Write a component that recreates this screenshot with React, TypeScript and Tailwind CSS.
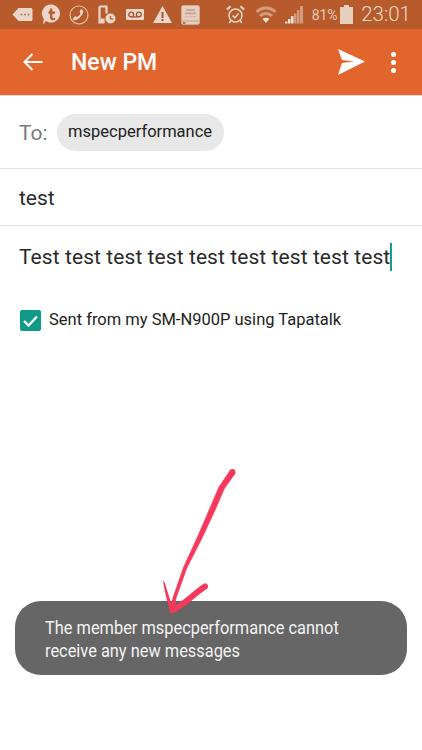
export default function App() {
  const sb = "#ecd6c9";
  const bg = "#b85b2c";
  return (
    <div className="relative w-[422px] h-[750px] bg-white overflow-hidden font-['Roboto',sans-serif]">
      {/* status bar */}
      <div className="h-[29px] bg-[#b85b2c] flex items-center pl-[12px] pr-[11px]">
        <div className="flex items-center">
          <svg width="21" height="15" viewBox="0 0 21 15"><path d="M6.500 1H19a1.500 1.500 0 0 1 1.500 1.500v10A1.500 1.500 0 0 1 19 14H6.500L.5 7.500z" fill={sb} /><circle cx="9.500" cy="7.500" r="1.100" fill="#a8876f" /><circle cx="13" cy="7.500" r="1.100" fill="#a8876f" /><circle cx="16.500" cy="7.500" r="1.100" fill="#a8876f" /></svg>
          <svg width="20" height="21" viewBox="0 0 20 21" className="ml-[8px]"><path d="M10 .5a9 9 0 1 1-5 16.500L2 20.500l.8-5.500A9 9 0 0 1 10 .5z" fill={sb} /><path d="M9 4.500h2.300V7.500h2.700v2.200h-2.700v3.300c0 1.200 1.200 1.400 2.700.8v2c-2.800 1-5-.1-5-2.600V9.700H7.500V8C8.500 7.600 9 6.300 9 4.500z" fill={bg} /></svg>
          <svg width="20" height="20" viewBox="0 0 20 20" fill="none" className="ml-[8px]"><circle cx="10" cy="10" r="9" stroke="#e6c3ae" strokeWidth="1.100" /><path d="M4.500 15.500c2-.2 3.800-1 5.800-2.600 2-1.800 3.500-4 4-6.200.1-.5 0-.9-.3-1.200l-1.300-1c-.5-.3-1-.2-1.200.3l-.8 1.700c-.2.400-.1.700.2 1l.7.700c-.7 1.500-2.300 3.100-3.800 3.900l-.8-.7c-.3-.2-.7-.3-1 0l-1.600 1.300c-.5.400-.6 1-.2 1.400z" fill={sb} /></svg>
          <svg width="18" height="19" viewBox="0 0 18 19" fill="none" className="ml-[9px]"><path d="M1.500 1.500h7v7M1.500 1.500v16h5" stroke={sb} strokeWidth="2.200" /><rect x="2.500" y="13.500" width="4" height="4" fill={sb} /><circle cx="12.500" cy="13.500" r="5" fill={sb} /><path d="M12.500 11v2.800h2.700" stroke={bg} strokeWidth="1.300" /></svg>
          <svg width="18" height="11" viewBox="0 0 18 11" fill="none" className="ml-[10px]"><rect width="18" height="11" rx="1" fill={sb} /><circle cx="5.200" cy="5.500" r="2.400" stroke="#a6552e" strokeWidth="1.300" /><circle cx="12.800" cy="5.500" r="2.400" stroke="#a6552e" strokeWidth="1.300" /><path d="M5.200 7.900h7.600" stroke="#a6552e" strokeWidth="1.300" /></svg>
          <svg width="19" height="17" viewBox="0 0 19 17" className="ml-[9px]"><path d="M9.500 0 19 17H0z" fill={sb} /><rect x="8.500" y="6" width="2" height="6" fill="#a6552e" /><rect x="8.500" y="13" width="2" height="2" fill="#a6552e" /></svg>
          <svg width="19" height="20" viewBox="0 0 19 20" className="ml-[9px]"><rect x=".5" y=".5" width="18" height="19" rx="2" fill="#e5cdbf" stroke="#d9a88c" /><rect x="5" y="4" width="9" height="1.800" fill="#c2a392" /><rect x="4" y="7.500" width="11" height="1.800" fill="#c2a392" /><rect x="4" y="11" width="11" height="1.200" fill="#d3b8a8" /><path d="M1 16h17.500" stroke="#c2a392" /><rect x="2" y="17" width="2.500" height="2" fill="#b27755" /></svg>
        </div>
        <div className="ml-auto flex items-center">
          <svg width="19" height="19" viewBox="0 0 19 19" fill="none" stroke={sb} strokeWidth="1.500"><circle cx="9.500" cy="10.500" r="6.500" /><path d="M6.500 10.500l2.300 2.300 3.700-4.300" /><path d="M1 4.500 4.500 1.200M18 4.500 14.500 1.200" strokeWidth="2.200" /><path d="M4.800 15.500 3.200 18M14.200 15.500l1.600 2.500" /></svg>
          <svg width="22" height="18" viewBox="0 0 22 18" fill="none" className="ml-[10px]"><path d="M1.500 6c5.500-5.300 13.500-5.300 19 0" stroke="#d39d7d" strokeWidth="3" /><path d="M5 10c3.500-3.300 8.500-3.300 12 0" stroke="#d39d7d" strokeWidth="3" /><path d="M7.500 12.800c2-1.500 5-1.500 7 0L11 17z" fill="#f0dfd4" /></svg>
          <svg width="19" height="19" viewBox="0 0 19 19" className="ml-[8px]"><path d="M0 18.500h2.500v-2H0zM3 18.500h2.500v-4.500H3zM6 18.500h2.500V11H6z" fill="#f0dfd4" /><path d="M9 18.500h2.500V8.500H9zM12 18.500h2.500V5H12zM15 18.500h3V1h-3z" fill="#d09c7e" /></svg>
          <span className="ml-[8px] text-[14px] leading-none text-[#e8c9b6] tracking-[-0.2px]">81%</span>
          <svg width="13" height="19" viewBox="0 0 13 19" className="ml-[3px]"><path d="M4 0h5v2h4v17H0V2h4z" fill="#e8cebf" /></svg>
          <span className="ml-[8px] text-[20.500px] font-light leading-none text-[#eed8cb]">23:01</span>
        </div>
      </div>

      {/* toolbar */}
      <div className="h-[67px] bg-[#e2652e] flex items-center text-white border-b border-[#dcd8d5]">
        <svg width="20" height="18" viewBox="0 0 20 18" fill="none" stroke="#fff" strokeWidth="2" className="ml-[23px]"><path d="M19.500 9H1.500M9.500 1 1.500 9l8 8" /></svg>
        <span className="ml-[28px] text-[23px] font-medium leading-none mt-[1px]">New PM</span>
        <svg width="27" height="26" viewBox="0 0 27 26" className="ml-auto"><path d="M0 0 27 12.500 0 26l4-12 12-1.500L4 11z" fill="#fff" /></svg>
        <div className="ml-[26px] mr-[26px] flex flex-col gap-[3px]">
          <div className="w-[5px] h-[5px] rounded-full bg-white" />
          <div className="w-[5px] h-[5px] rounded-full bg-white" />
          <div className="w-[5px] h-[5px] rounded-full bg-white" />
        </div>
      </div>

      {/* To row */}
      <div className="h-[73px] flex items-center pl-[19px] border-b border-[#e2e2e2]">
        <span className="text-[21px] text-[#7a7a7a] leading-none mt-[2px]">To:</span>
        <span className="ml-[9px] h-[37px] w-[167px] flex items-center justify-center rounded-full bg-[#e8e8e8] text-[16.500px] text-[#212121]">mspecperformance</span>
      </div>

      {/* subject */}
      <div className="h-[57px] flex items-center pl-[19px] pt-[3px] border-b border-[#e2e2e2] text-[21px] text-[#2a2a2a]">test</div>

      {/* body */}
      <div className="pl-[19px] pt-[17px] flex items-center text-[21px] leading-[26px] text-[#2a2a2a] tracking-[0.080px]">
        <span>Test test test test test test test test test</span>
        <span className="w-[2px] h-[28px] bg-[#1b9b8b]" />
      </div>

      {/* checkbox */}
      <div className="mt-[39px] pl-[20px] flex items-center">
        <span className="w-[21px] h-[21px] rounded-[2px] bg-[#0e9a86] flex items-center justify-center">
          <svg width="15" height="12" viewBox="0 0 15 12" fill="none" stroke="#fff" strokeWidth="2.400"><path d="M1 6l4.500 4.500L14 1.500" /></svg>
        </span>
        <span className="ml-[8px] text-[16.500px] leading-none text-[#222]">Sent from my SM-N900P using Tapatalk</span>
      </div>

      {/* toast */}
      <div className="absolute left-[15px] top-[601px] w-[392px] h-[74px] rounded-[26px] bg-[#666666] pl-[30px] pt-[16px] text-[18px] leading-[22.500px] text-[#f4f4f4]">
        <div className="origin-left scale-x-[0.91] whitespace-nowrap">The member mspecperformance cannot</div>
        <div className="origin-left scale-x-[0.91] whitespace-nowrap">receive any new messages</div>
      </div>

      {/* hand-drawn arrow */}
      <svg className="absolute left-0 top-0 pointer-events-none" width="422" height="750" viewBox="0 0 422 750">
        <path d="M235 473.500 224 489 215.500 509 202 538 186.500 568.500 176 598 173.500 612 170.500 611 173 598 183.500 567.500 198 536 210.500 507 219 487 230.500 470z" fill="#f5385c" stroke="#f5385c" strokeWidth=".8" strokeLinejoin="round" />
        <circle cx="232.500" cy="472" r="3" fill="#f5385c" />
        <path d="M163 581c.8 0 1.500 1 2.500 4 2 7 5 15 8.500 27l-3 1.500c-3.500-11-6-20-8-32.500z" fill="#f5385c" />
        <path d="M172.500 610c11-4.500 21-16 32.500-23.500" fill="none" stroke="#f5385c" strokeWidth="6" strokeLinecap="round" />
      </svg>
    </div>
  );
}
